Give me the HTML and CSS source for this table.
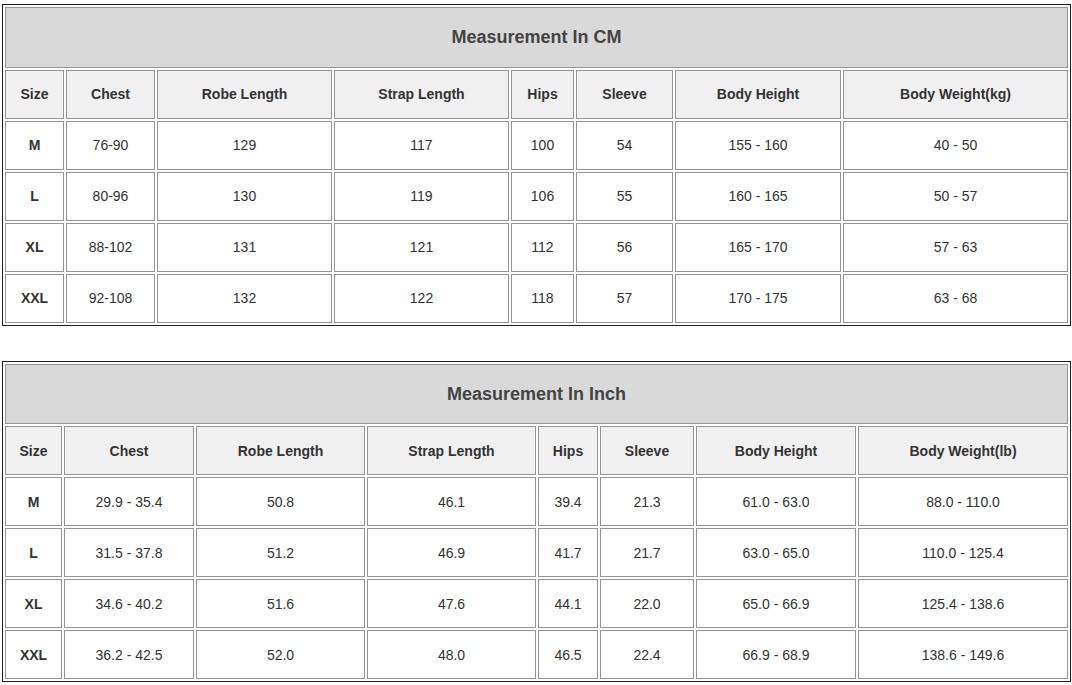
FILE: index.html
```html
<!DOCTYPE html>
<html>
<head>
<meta charset="utf-8">
<title>Size Chart</title>
<link rel="stylesheet" href="styles.css">
</head>
<body>
<div class="page">
  <table class="chart cm">
    <colgroup>
      <col class="c1"><col class="c2"><col class="c3"><col class="c4"><col class="c5"><col class="c6"><col class="c7"><col class="c8">
    </colgroup>
    <tr class="title-row"><td colspan="8">Measurement In CM</td></tr>
    <tr class="head-row"><th>Size</th><th>Chest</th><th>Robe Length</th><th>Strap Length</th><th>Hips</th><th>Sleeve</th><th>Body Height</th><th>Body Weight(kg)</th></tr>
    <tr><th class="size">M</th><td>76-90</td><td>129</td><td>117</td><td>100</td><td>54</td><td>155 - 160</td><td>40 - 50</td></tr>
    <tr><th class="size">L</th><td>80-96</td><td>130</td><td>119</td><td>106</td><td>55</td><td>160 - 165</td><td>50 - 57</td></tr>
    <tr><th class="size">XL</th><td>88-102</td><td>131</td><td>121</td><td>112</td><td>56</td><td>165 - 170</td><td>57 - 63</td></tr>
    <tr><th class="size">XXL</th><td>92-108</td><td>132</td><td>122</td><td>118</td><td>57</td><td>170 - 175</td><td>63 - 68</td></tr>
  </table>

  <table class="chart inch">
    <colgroup>
      <col class="c1"><col class="c2"><col class="c3"><col class="c4"><col class="c5"><col class="c6"><col class="c7"><col class="c8">
    </colgroup>
    <tr class="title-row"><td colspan="8">Measurement In Inch</td></tr>
    <tr class="head-row"><th>Size</th><th>Chest</th><th>Robe Length</th><th>Strap Length</th><th>Hips</th><th>Sleeve</th><th>Body Height</th><th>Body Weight(lb)</th></tr>
    <tr><th class="size">M</th><td>29.9 - 35.4</td><td>50.8</td><td>46.1</td><td>39.4</td><td>21.3</td><td>61.0 - 63.0</td><td>88.0 - 110.0</td></tr>
    <tr><th class="size">L</th><td>31.5 - 37.8</td><td>51.2</td><td>46.9</td><td>41.7</td><td>21.7</td><td>63.0 - 65.0</td><td>110.0 - 125.4</td></tr>
    <tr><th class="size">XL</th><td>34.6 - 40.2</td><td>51.6</td><td>47.6</td><td>44.1</td><td>22.0</td><td>65.0 - 66.9</td><td>125.4 - 138.6</td></tr>
    <tr><th class="size">XXL</th><td>36.2 - 42.5</td><td>52.0</td><td>48.0</td><td>46.5</td><td>22.4</td><td>66.9 - 68.9</td><td>138.6 - 149.6</td></tr>
  </table>
</div>
</body>
</html>
```

FILE: styles.css
```css
html, body {
  margin: 0;
  padding: 0;
  background: #ffffff;
}

.page {
  padding: 4px 0 0 2px;
  font-family: "Liberation Sans", Arial, sans-serif;
  color: #333333;
}

.chart {
  width: 1069px;
  table-layout: fixed;
  border-collapse: separate;
  border-spacing: 2px;
  border: 1px solid #1e1e1e;
  margin: 0;
}

.chart.inch {
  margin-top: 35px;
}

.chart td,
.chart th {
  box-sizing: border-box;
  border: 1px solid #959595;
  padding: 0 0 2px 0;
  text-align: center;
  vertical-align: middle;
  height: 49px;
  font-size: 14px;
  color: #333333;
}

.chart.inch td,
.chart.inch th {
  padding: 0;
}

.chart td {
  font-weight: normal;
  background: #ffffff;
}

.chart th {
  font-weight: bold;
  background: #ffffff;
}

.chart .head-row th {
  background: #f0f0f0;
}

.chart .title-row td {
  height: 61px;
  padding: 0;
  background: #d9d9d9;
  font-size: 18px;
  font-weight: bold;
  color: #444444;
}

.chart.inch .title-row td {
  height: 60px;
}

/* CM table column widths */
.cm .c1 { width: 59px; }
.cm .c2 { width: 89px; }
.cm .c3 { width: 175px; }
.cm .c4 { width: 175px; }
.cm .c5 { width: 63px; }
.cm .c6 { width: 97px; }
.cm .c7 { width: 166px; }
.cm .c8 { width: 225px; }

/* Inch table column widths */
.inch .c1 { width: 57px; }
.inch .c2 { width: 130px; }
.inch .c3 { width: 169px; }
.inch .c4 { width: 169px; }
.inch .c5 { width: 60px; }
.inch .c6 { width: 94px; }
.inch .c7 { width: 160px; }
.inch .c8 { width: 210px; }
```
